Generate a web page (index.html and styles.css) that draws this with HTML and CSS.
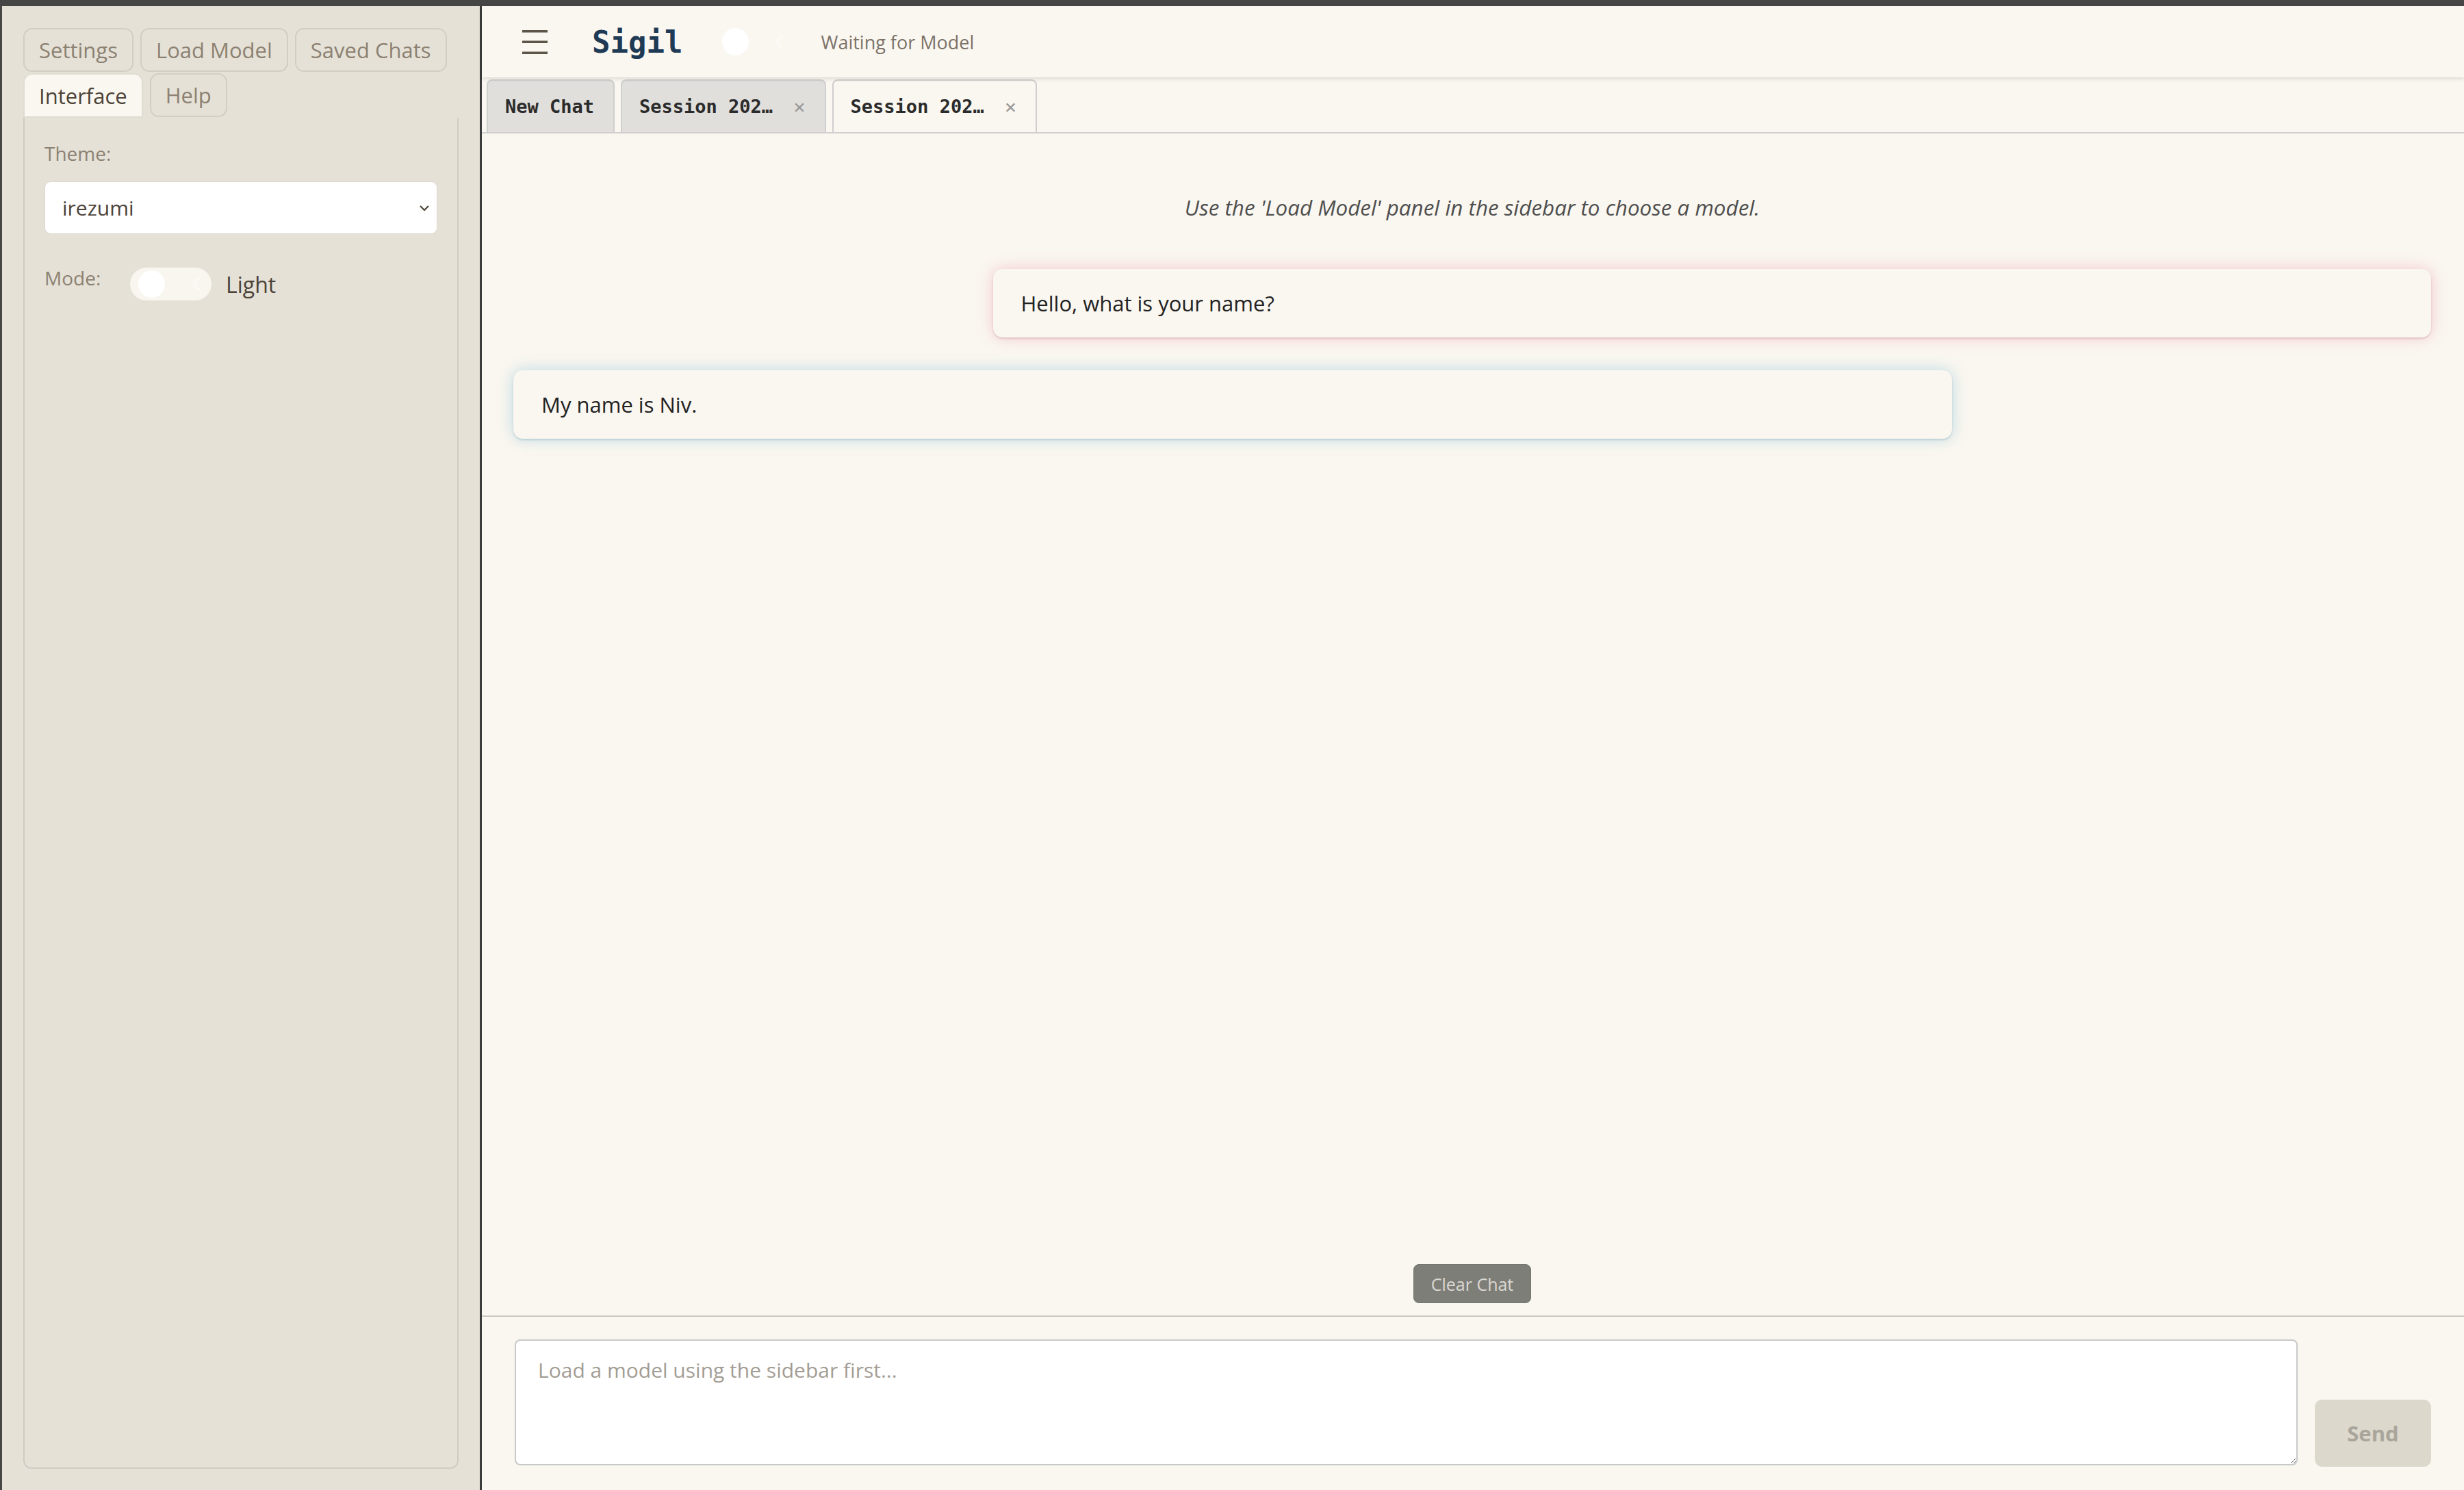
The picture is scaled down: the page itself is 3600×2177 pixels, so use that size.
FILE: index.html
```html
<!DOCTYPE html>
<html lang="en">
<head>
<meta charset="utf-8">
<title>Sigil</title>
<link rel="stylesheet" href="styles.css">
</head>
<body>
<div class="app">
  <aside class="sidebar">
    <div class="side-tabs">
      <button class="side-tab">Settings</button>
      <button class="side-tab">Load Model</button>
      <button class="side-tab">Saved Chats</button>
      <button class="side-tab active">Interface</button>
      <button class="side-tab">Help</button>
    </div>
    <div class="panel">
      <div class="field-label">Theme:</div>
      <div class="select">
        <span>irezumi</span>
        <svg class="chev" width="16" height="10" viewBox="0 0 16 10"><polyline points="2,2 8,8 14,2" fill="none" stroke="#4b4238" stroke-width="2.2"/></svg>
      </div>
      <div class="mode-row">
        <div class="mode-label">Mode:</div>
        <div class="mode-ctl">
          <div class="toggle"><span class="knob"></span><span class="moon">☾</span></div>
          <span class="mode-text">Light</span>
        </div>
      </div>
    </div>
  </aside>
  <main class="main">
    <header class="header">
      <svg class="burger" width="37" height="35" viewBox="0 0 37 35"><rect x="0" y="0" width="37" height="3.5" fill="#5d5547"/><rect x="0" y="15.5" width="37" height="3.5" fill="#5d5547"/><rect x="0" y="31.5" width="37" height="3.5" fill="#5d5547"/></svg>
      <span class="brand">Sigil</span>
      <div class="toggle toggle-head"><span class="knob"></span><span class="moon">☾</span></div>
      <span class="status">Waiting for Model</span>
    </header>
    <nav class="chat-tabs">
      <div class="chat-tab">New Chat</div>
      <div class="chat-tab">Session 202…<span class="close">×</span></div>
      <div class="chat-tab active">Session 202…<span class="close">×</span></div>
    </nav>
    <section class="chat">
      <p class="intro">Use the 'Load Model' panel in the sidebar to choose a model.</p>
      <div class="msg user">Hello, what is your name?</div>
      <div class="msg bot">My name is Niv.</div>
      <button class="clear">Clear Chat</button>
    </section>
    <footer class="composer">
      <textarea class="input" placeholder="Load a model using the sidebar first..."></textarea>
      <button class="send">Send</button>
    </footer>
  </main>
</div>
</body>
</html>
```
FILE: styles.css
```css
* { box-sizing: border-box; }
html, body { margin: 0; }
body {
  padding: 9px 0 0 3px;
  background: #464646;
  height: 2177px;
  overflow: hidden;
  font-family: "Open Sans", "Noto Sans", sans-serif;
}
.app {
  display: flex;
  height: 2168px;
}
.sidebar {
  width: 701px;
  flex: none;
  background: #e5e1d7;
  border-right: 3px solid #3c3c3c;
  padding: 32px 31px 31px;
  display: flex;
  flex-direction: column;
}
.side-tabs {
  display: flex;
  flex-wrap: wrap;
  column-gap: 10px;
  row-gap: 2px;
}
.side-tab {
  height: 64px;
  padding: 0 21px;
  font-family: inherit;
  font-size: 31px;
  color: #8c8172;
  background: transparent;
  border: 2px solid #d2cec6;
  border-radius: 13px;
}
.side-tab.active {
  height: 65px;
  background: #faf7f0;
  color: #4b4238;
  border-color: #e0dcd3;
  border-bottom-left-radius: 0;
  border-bottom-right-radius: 0;
}
.panel {
  flex: 1;
  border: 2px solid #d0ccc5;
  border-top: none;
  border-radius: 0 0 12px 12px;
  padding: 32px 29px;
}
.field-label {
  font-size: 28px;
  line-height: 40px;
  color: #8c8172;
}
.select {
  margin-top: 21px;
  height: 77px;
  background: #ffffff;
  border: 1px solid #ddd8ce;
  border-radius: 9px;
  display: flex;
  align-items: center;
  justify-content: space-between;
  padding: 0 10px 0 25px;
  font-size: 30px;
  color: #4b4238;
}
.mode-row {
  margin-top: 44px;
  display: flex;
  align-items: flex-start;
}
.mode-label {
  width: 125px;
  font-size: 28px;
  line-height: 40px;
  color: #8c8172;
}
.mode-ctl {
  margin-top: 5px;
  display: flex;
  align-items: center;
  gap: 21px;
}
.toggle {
  width: 119px;
  height: 48px;
  border-radius: 24px;
  background: #f9f6ef;
  display: flex;
  align-items: center;
  justify-content: space-between;
  padding: 0 10px 0 12px;
}
.knob {
  width: 39px;
  height: 40px;
  border-radius: 50%;
  background: #ffffff;
}
.moon {
  font-family: "DejaVu Sans", sans-serif;
  font-size: 20px;
  color: #ffffff;
}
.mode-text {
  font-size: 32px;
  color: #4b4238;
}
.main {
  flex: 1;
  display: flex;
  flex-direction: column;
  background: #faf7f0;
  min-width: 0;
}
.header {
  height: 104px;
  flex: none;
  display: flex;
  align-items: center;
  padding-left: 59px;
  background: #faf7f0;
  box-shadow: 0 2px 6px rgba(0,0,0,0.13);
  position: relative;
  z-index: 1;
}
.brand {
  margin-left: 65px;
  font-family: "DejaVu Sans Mono", monospace;
  font-weight: bold;
  font-size: 44px;
  color: #1f3a55;
}
.toggle-head {
  margin-left: 43px;
  width: 120px;
  background: #faf7f0;
  padding-left: 15px;
}
.status {
  margin-left: 39px;
  font-size: 27px;
  color: #7b7268;
}
.chat-tabs {
  height: 82px;
  flex: none;
  display: flex;
  align-items: flex-end;
  gap: 9px;
  padding-left: 7px;
  border-bottom: 2px solid #cfcfcf;
}
.chat-tab {
  height: 77px;
  display: flex;
  align-items: center;
  padding: 0 28px 0 25px;
  background: #e0dfdc;
  border: 2px solid #cfcfcf;
  border-bottom: none;
  border-radius: 8px 8px 0 0;
  font-family: "DejaVu Sans Mono", monospace;
  font-weight: bold;
  font-size: 27px;
  color: #2b2b2b;
}
.chat-tab.active {
  background: #faf7f0;
}
.close {
  margin-left: 30px;
  font-weight: normal;
  font-size: 29px;
  color: #9a9a9a;
}
.chat {
  flex: 1;
  display: flex;
  flex-direction: column;
  padding: 0 48px 0 46px;
  min-height: 0;
}
.intro {
  margin: 87px 0 0;
  text-align: center;
  font-style: italic;
  font-size: 31.4px;
  line-height: 42px;
  color: #4e4e4e;
}
.msg {
  width: 75%;
  height: 100px;
  padding: 28px 41px;
  border-radius: 14px;
  background: #faf7f0;
  font-size: 31px;
  line-height: 44px;
  color: #222222;
}
.msg.user {
  margin-top: 69px;
  align-self: flex-end;
  box-shadow: 0 0 22px rgba(236,120,145,0.38), 0 2px 3px rgba(120,60,70,0.2);
}
.msg.bot {
  margin-top: 48px;
  box-shadow: 0 0 22px rgba(100,175,210,0.42), 0 2px 3px rgba(50,100,120,0.2);
}
.clear {
  margin-top: auto;
  margin-bottom: 18px;
  align-self: center;
  width: 172px;
  height: 57px;
  background: #7e7e79;
  border: 1px solid #767671;
  border-radius: 8px;
  font-family: inherit;
  font-size: 25px;
  color: #dad8d2;
}
.composer {
  height: 255px;
  flex: none;
  border-top: 2px solid #ccc9c3;
  padding: 33px 48px 36px;
  display: flex;
  align-items: flex-end;
  gap: 25px;
}
.input {
  flex: 1;
  height: 184px;
  border: 2px solid #c9c9c9;
  border-radius: 8px;
  background: #ffffff;
  padding: 22px 32px;
  font-family: inherit;
  font-size: 30px;
  line-height: 42px;
  color: #333;
  resize: both;
}
.input::placeholder {
  color: #a39d94;
}
.send {
  width: 170px;
  height: 98px;
  margin-bottom: -2px;
  background: #dcd8cc;
  border: none;
  border-radius: 11px;
  font-family: inherit;
  font-weight: bold;
  font-size: 31px;
  color: #aaa59b;
}
```
